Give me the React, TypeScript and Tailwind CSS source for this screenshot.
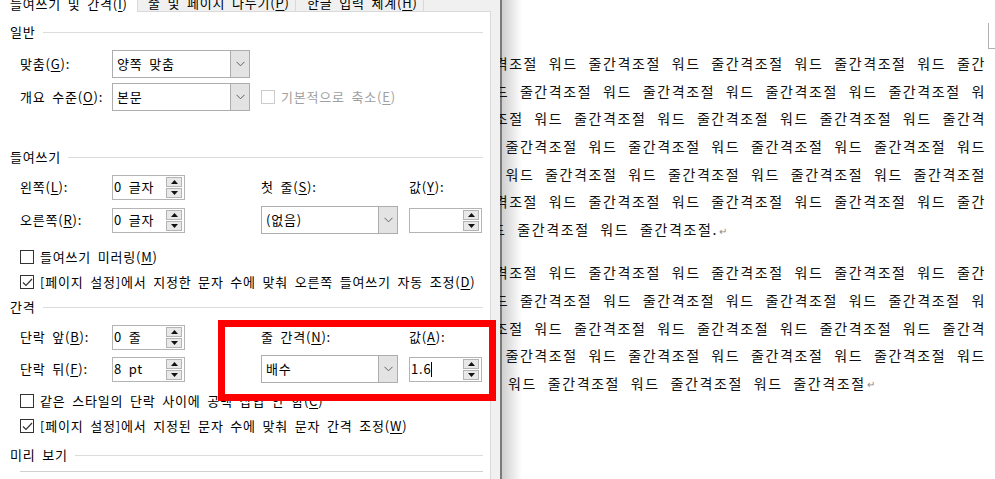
const U = ({ c }: { c: string }) => <span className="underline underline-offset-[2px]">{c}</span>;

function Lbl({ t, k, colon = true }: { t: string; k: string; colon?: boolean }) {
  return (
    <span className="whitespace-nowrap">
      {t}(<U c={k} />){colon ? ":" : ""}
    </span>
  );
}

function Chevron() {
  return (
    <svg width="9" height="6" viewBox="0 0 9 6">
      <path d="M0.5 0.8 L4.5 4.8 L8.5 0.8" fill="none" stroke="#606060" strokeWidth="1" />
    </svg>
  );
}

function Combo({ value, w }: { value: string; w: string }) {
  return (
    <div className={`flex h-[28px] ${w} border border-[#adadad] bg-white`}>
      <div className="flex flex-1 items-center pl-[4px]">{value}</div>
      <div className="flex w-[19px] items-center justify-center border-l border-[#adadad] bg-[#e3e3e3]">
        <Chevron />
      </div>
    </div>
  );
}

function Arrow({ down }: { down?: boolean }) {
  return (
    <svg width="7" height="4" viewBox="0 0 7 4">
      <path d={down ? "M0 0 L7 0 L3.5 4 Z" : "M3.5 0 L7 4 L0 4 Z"} fill="#111" />
    </svg>
  );
}

function Spin({ value, caret }: { value?: string; caret?: boolean }) {
  return (
    <div className="flex h-[25px] w-[73px] items-center border border-[#b4b4b4] bg-white">
      <div className="flex flex-1 items-center pl-[1px]">
        {value}
        {caret && <span className="h-[15px] w-px bg-black" />}
      </div>
      <div className="mr-[2px] flex w-[16px] flex-col gap-px">
        <div className="flex h-[10px] items-center justify-center border border-[#b4b4b4] bg-[#e8e8e8]">
          <Arrow />
        </div>
        <div className="flex h-[10px] items-center justify-center border border-[#b4b4b4] bg-[#e8e8e8]">
          <Arrow down />
        </div>
      </div>
    </div>
  );
}

function Check({ checked, disabled }: { checked?: boolean; disabled?: boolean }) {
  return (
    <div
      className={`flex h-[14px] w-[14px] shrink-0 items-center justify-center border bg-white ${
        disabled ? "border-[#cccccc]" : "border-[#333333]"
      }`}
    >
      {checked && (
        <svg width="11" height="9" viewBox="0 0 11 9">
          <path d="M1 4.5 L4 7.5 L10 1" fill="none" stroke="#333" strokeWidth="1.2" />
        </svg>
      )}
    </div>
  );
}

function Section({ title, cls }: { title: string; cls: string }) {
  return (
    <div className={`flex h-[16px] items-center gap-[7px] ${cls}`}>
      <span className="whitespace-nowrap">{title}</span>
      <div className="h-px flex-1 bg-[#dcdcdc]" />
    </div>
  );
}

function CheckRow({ cls, checked, children }: { cls: string; checked?: boolean; children: React.ReactNode }) {
  return (
    <div className={`flex h-[16px] items-center gap-[6px] pl-[10px] ${cls}`}>
      <Check checked={checked} />
      <span className="whitespace-nowrap">{children}</span>
    </div>
  );
}

const full = [
  "줄간격조절 워드 줄간격조절 워드 줄간격조절 워드 줄간격조절 워드 줄간",
  "워드 줄간격조절 워드 줄간격조절 워드 줄간격조절 워드 줄간격조절 워",
  "줄간격조절 워드 줄간격조절 워드 줄간격조절 워드 줄간격조절 워드 줄간격",
  "조절 워드 줄간격조절 워드 줄간격조절 워드 줄간격조절 워드 줄간격조절 워드",
  "줄간격조절 워드 줄간격조절 워드 줄간격조절 워드 줄간격조절 워드 줄간격조절",
  "줄간격조절 워드 줄간격조절 워드 줄간격조절 워드 줄간격조절 워드 줄간",
];

const Mark = () => <span className="ml-[1px] text-[10px] tracking-normal text-[#8a8a8a]">↵</span>;

function Line({ text }: { text: string }) {
  return <div className="flex h-[27.6px] items-center justify-end whitespace-nowrap">{text}</div>;
}

export default function App() {
  return (
    <div className="relative flex h-[479px] w-[995px] overflow-hidden bg-white font-['Noto_Sans_CJK_KR',sans-serif] text-black">
      {/* dialog */}
      <div className="flex w-[500px] shrink-0 bg-[#f0f0f0] text-[13px] leading-[16px] tracking-[0.8px] [word-spacing:3px]">
        <div className="flex w-[491px] flex-col">
          <div className="-mt-[5px] flex h-[23px]">
            <div className="flex w-[138px] items-center border-r border-[#d9d9d9] bg-white pl-[10px]">
              <Lbl t="들여쓰기 및 간격" k="I" colon={false} />
            </div>
            <div className="flex w-[158px] items-center border-r border-b border-[#d9d9d9] bg-[#f0f0f0] pl-[10px]">
              <Lbl t="줄 및 페이지 나누기" k="P" colon={false} />
            </div>
            <div className="flex w-[128px] items-center border-r border-b border-[#d9d9d9] bg-[#f0f0f0] pl-[11px]">
              <Lbl t="한글 입력 체계" k="H" colon={false} />
            </div>
            <div className="flex-1 border-b border-[#d9d9d9]" />
          </div>

          <div className="flex flex-1 flex-col border-r border-[#d9d9d9] bg-white pl-[10px] pr-[7px]">
            <Section title="일반" cls="mt-[12px]" />
            <div className="mt-[10px] flex h-[28px] items-center pl-[10px]">
              <div className="w-[92px]">
                <Lbl t="맞춤" k="G" />
              </div>
              <Combo value="양쪽 맞춤" w="w-[138px]" />
            </div>
            <div className="mt-[5px] flex h-[28px] items-center pl-[10px]">
              <div className="w-[92px]">
                <Lbl t="개요 수준" k="O" />
              </div>
              <Combo value="본문" w="w-[138px]" />
              <div className="ml-[11px] flex items-center gap-[6px] text-[#a0a0a0]">
                <Check disabled />
                <span>
                  기본적으로 축소(<U c="E" />)
                </span>
              </div>
            </div>

            <Section title="들여쓰기" cls="mt-[38px]" />
            <div className="mt-[9px] grid grid-cols-[92px_73px_76px_137px_11px_73px] grid-rows-[26px_28px] items-center gap-y-[6px] pl-[10px]">
              <Lbl t="왼쪽" k="L" />
              <Spin value="0 글자" />
              <div />
              <Lbl t="첫 줄" k="S" />
              <div />
              <Lbl t="값" k="Y" />
              <Lbl t="오른쪽" k="R" />
              <Spin value="0 글자" />
              <div />
              <Combo value="(없음)" w="w-[137px]" />
              <div />
              <Spin />
            </div>
            <CheckRow cls="mt-[15px]">
              들여쓰기 미러링(<U c="M" />)
            </CheckRow>
            <CheckRow cls="mt-[9px]" checked>
              [페이지 설정]에서 지정한 문자 수에 맞춰 오른쪽 들여쓰기 자동 조정(<U c="D" />)
            </CheckRow>

            <Section title="간격" cls="mt-[9px]" />
            <div className="mt-[9px] grid grid-cols-[92px_73px_76px_137px_11px_73px] grid-rows-[26px_28px] items-center gap-y-[5px] pl-[10px]">
              <Lbl t="단락 앞" k="B" />
              <Spin value="0 줄" />
              <div />
              <Lbl t="줄 간격" k="N" />
              <div />
              <Lbl t="값" k="A" />
              <Lbl t="단락 뒤" k="F" />
              <Spin value="8 pt" />
              <div />
              <Combo value="배수" w="w-[137px]" />
              <div />
              <Spin value="1.6" caret />
            </div>
            <CheckRow cls="mt-[10px]">
              같은 스타일의 단락 사이에 공백 삽입 안 함(<U c="C" />)
            </CheckRow>
            <CheckRow cls="mt-[9px]" checked>
              [페이지 설정]에서 지정된 문자 수에 맞춰 문자 간격 조정(<U c="W" />)
            </CheckRow>

            <Section title="미리 보기" cls="mt-[13px]" />
            <div className="ml-[10px] mt-[8px] h-[20px] border-t border-[#d0d0d0]" />
          </div>
        </div>
      </div>

      {/* document page behind the dialog */}
      <div className="relative flex-1 overflow-hidden bg-[linear-gradient(to_right,#7a7a7a_0px,#7a7a7a_2px,#cfcfcf_2px,#ffffff_22px)] pr-[9px] pt-[50px] text-[14px] tracking-[1.6px] text-[#111] [word-spacing:6px]">
        <div className="absolute left-[488px] top-[23px] h-[26px] w-[7px] border-b border-l border-[#b0b0b0]" />
        {full.map((t, i) => (
          <Line key={i} text={t} />
        ))}
        <div className="flex h-[27.6px] items-center whitespace-nowrap">
          <span className="-ml-[8px]">
            드 줄간격조절 워드 줄간격조절.
            <Mark />
          </span>
        </div>

        <div className="mt-[16px]">
          {full.slice(0, 4).map((t, i) => (
            <Line key={i} text={t} />
          ))}
          <div className="flex h-[27.6px] items-center whitespace-nowrap pl-[8px]">
            워드 줄간격조절 워드 줄간격조절 워드 줄간격조절
            <Mark />
          </div>
        </div>
      </div>

      {/* annotation box */}
      <div className="absolute left-[218px] top-[320px] h-[81px] w-[278px] border-[7px] border-[#ff0000]" />
    </div>
  );
}
